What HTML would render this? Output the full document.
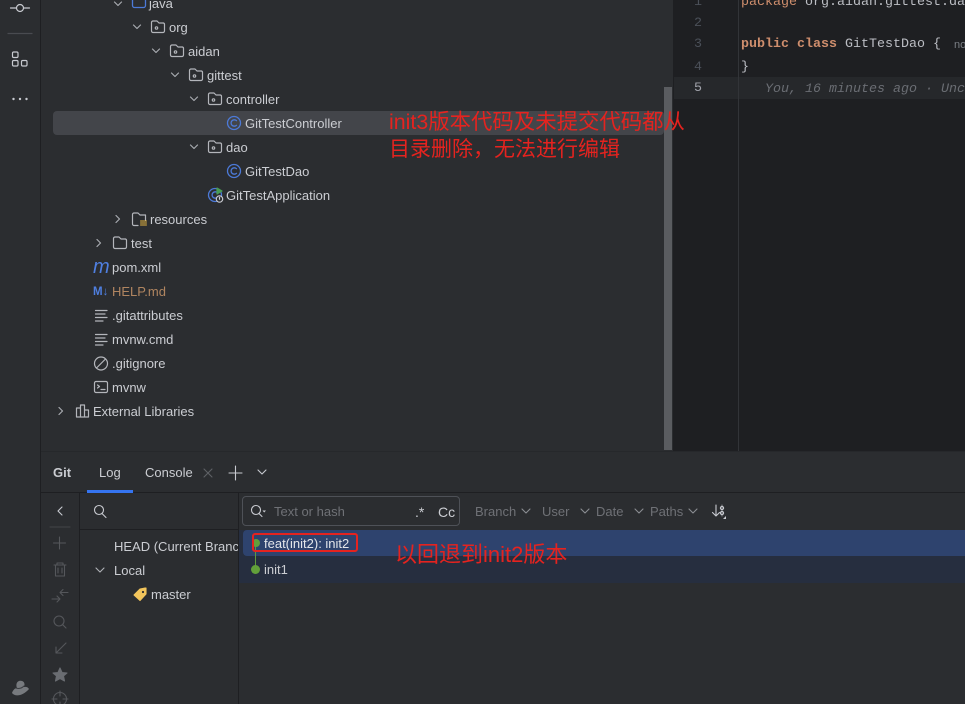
<!DOCTYPE html>
<html><head><meta charset="utf-8"><style>
html,body{margin:0;padding:0}
body{width:965px;height:704px;position:relative;overflow:hidden;background:#2b2d30;font-family:"Liberation Sans","Noto Sans CJK SC",sans-serif;font-size:13px;color:#cbcdd2}
.a{position:absolute}
.t{position:absolute;white-space:nowrap;line-height:16px;height:16px}
.m{position:absolute;white-space:pre;font-family:"Liberation Mono",monospace;font-size:13.33px;line-height:16px}
.r{position:absolute;white-space:nowrap;color:#e5231f;font-family:"Liberation Sans","Noto Sans CJK SC",sans-serif;line-height:24px}
svg{position:absolute;overflow:hidden;fill:none;stroke-linecap:round;stroke-linejoin:round}
</style></head><body>
<!-- left strip -->
<div class="a" style="left:40px;top:0;width:1px;height:704px;background:#1e1f22"></div>
<!-- editor -->
<div class="a" style="left:673px;top:0;width:292px;height:451px;background:#1e1f22"></div>
<div class="a" style="left:674px;top:77px;width:291px;height:22px;background:#26282b"></div>
<div class="a" style="left:738px;top:0;width:1px;height:451px;background:#323438"></div>
<div class="a" style="left:664px;top:87px;width:8px;height:363px;background:#5a5c60"></div>
<div class="a" style="left:41px;top:451px;width:924px;height:1px;background:#26282b"></div>
<div class="a" style="left:41px;top:492px;width:924px;height:1px;background:#1e1f22"></div>
<!-- line numbers -->
<div class="m" style="left:694px;top:-5px;color:#4b5059">1</div>
<div class="m" style="left:694px;top:16px;color:#4b5059">2</div>
<div class="m" style="left:694px;top:37px;color:#4b5059">3</div>
<div class="m" style="left:694px;top:60px;color:#4b5059">4</div>
<div class="m" style="left:694px;top:81px;color:#a1a3ab">5</div>
<div class="m" style="left:741px;top:-5px;color:#bcbec4"><span style="color:#cf8e6d">package</span> org.aidan.gittest.da</div>
<div class="m" style="left:741px;top:37px;color:#bcbec4"><span style="color:#cf8e6d;font-weight:bold">public class</span> GitTestDao {</div>
<div class="t" style="left:954px;top:37px;color:#7a7e85;font-size:11px;width:11px;overflow:hidden">no</div>
<div class="m" style="left:741px;top:60px;color:#bcbec4">}</div>
<div class="m" style="left:765px;top:82px;color:#6a6d73;font-style:italic">You, 16 minutes ago · Unc</div>
<!-- selected tree row -->
<div class="a" style="left:53px;top:111px;width:611px;height:24px;background:#43454a;border-radius:4px"></div>
<!-- left strip icons -->
<svg style="left:0;top:0" width="40" height="110" stroke="#c8cad0" stroke-width="1.2">
<path d="M10.5 8H16M24 8H29.5"/><circle cx="20" cy="8" r="3.5"/>
<path d="M8 33.5H32" stroke="#494b50"/>
<rect x="12.5" y="52" width="5.5" height="5.5" rx="1.2"/><rect x="12.5" y="60.5" width="5.5" height="5.5" rx="1.2"/><rect x="21.5" y="60.5" width="5.5" height="5.5" rx="1.2"/>
<circle cx="13.5" cy="99" r="1.2" fill="#c8cad0" stroke="none"/><circle cx="20" cy="99" r="1.2" fill="#c8cad0" stroke="none"/><circle cx="26.5" cy="99" r="1.2" fill="#c8cad0" stroke="none"/>
</svg>
<svg style="left:10px;top:678px" width="22" height="20"><path d="M2 15C5 19 13 18 19 11C17 8 15 9 14 9C16 4 12 2 9 3C6 4 6 8 7 10C5 10 3 12 2 15Z" fill="#777a7e"/><path d="M6 10C9 11 12 10 14 8" stroke="#3a3c40" stroke-width="1"/></svg>
<!-- tree icons & chevrons -->
<svg style="left:0;top:0" width="340" height="425" stroke="#a8abb0" stroke-width="1.2">
<path d="M114.500 2L118 5.500L121.500 2M133.500 25L137 28.500L140.500 25M152.500 49L156 52.500L159.500 49M171.500 73L175 76.500L178.500 73M190.500 97L194 100.500L197.500 97M190.500 145L194 148.500L197.500 145"/>
<path d="M116 215.500L119.500 219L116 222.500M97 239.500L100.500 243L97 246.500M59 407.500L62.500 411L59 414.500"/>
<path d="M132.500 -1V5.500A2 2 0 0 0 134.500 7.500H143.500A2 2 0 0 0 145.500 5.500V-1" stroke="#4c7ad8" stroke-width="1.3"/>
<g stroke="#b4b6bb"><path d="M151.500 22.500A1.500 1.500 0 0 1 153 21H157L159 23H163.500A1.500 1.500 0 0 1 164.500 24.500V31A1.500 1.500 0 0 1 163 32.500H153A1.500 1.500 0 0 1 151.500 31Z"/><circle cx="156.500" cy="28" r="1.200"/>
<path d="M170.500 46.500A1.500 1.500 0 0 1 172 45H176L178 47H182.500A1.500 1.500 0 0 1 183.500 48.500V55A1.500 1.500 0 0 1 182 56.500H172A1.500 1.500 0 0 1 170.500 55Z"/><circle cx="175.500" cy="52" r="1.200"/>
<path d="M189.500 70.500A1.500 1.500 0 0 1 191 69H195L197 71H201.500A1.500 1.500 0 0 1 202.500 72.500V79A1.500 1.500 0 0 1 201 80.500H191A1.500 1.500 0 0 1 189.500 79Z"/><circle cx="194.500" cy="76" r="1.200"/>
<path d="M208.500 94.500A1.500 1.500 0 0 1 210 93H214L216 95H220.500A1.500 1.500 0 0 1 221.500 96.500V103A1.500 1.500 0 0 1 220 104.500H210A1.500 1.500 0 0 1 208.500 103Z"/><circle cx="213.500" cy="100" r="1.200"/>
<path d="M208.500 142.500A1.500 1.500 0 0 1 210 141H214L216 143H220.500A1.500 1.500 0 0 1 221.500 144.500V151A1.500 1.500 0 0 1 220 152.500H210A1.500 1.500 0 0 1 208.500 151Z"/><circle cx="213.500" cy="148" r="1.200"/>
<path d="M138 225.500H134A1.500 1.500 0 0 1 132.500 224V214.500A1.500 1.500 0 0 1 134 213H138L140 215H145.500V220"/>
<path d="M113.500 238.500A1.500 1.500 0 0 1 115 237H119L121 239H125.500A1.500 1.500 0 0 1 126.500 240.500V247A1.500 1.500 0 0 1 125 248.500H115A1.500 1.500 0 0 1 113.500 247Z"/></g>
<path d="M140.500 221H146.500M140.500 223H146.500M140.500 225H146.500" stroke="#e3b341" stroke-width="1"/>
<g stroke="#4c7ad8" stroke-width="1.300"><circle cx="234" cy="123" r="6.500"/><path d="M236.500 120.700A3.200 3.200 0 1 0 236.500 125.300"/>
<circle cx="234" cy="171" r="6.500"/><path d="M236.500 168.700A3.200 3.200 0 1 0 236.500 173.300"/>
<circle cx="215" cy="195" r="6.500"/><path d="M217.500 192.700A3.200 3.200 0 1 0 217.500 197.300"/></g>
<path d="M217 188V194L222 191Z" fill="#499c54" stroke="#499c54"/><circle cx="219.500" cy="199" r="3.200" fill="#2b2d30" stroke="#c8cad0"/><path d="M219.500 197.300V199.300" stroke="#c8cad0"/>
<g stroke="#b4b6bb"><path d="M95.500 310.500H107M95.500 314H105M95.500 317.500H107M95.500 321H103M95.500 334.500H107M95.500 338H105M95.500 341.500H107M95.500 345H103"/>
<circle cx="101" cy="363.500" r="6.500"/><path d="M96.500 368L105.500 359"/>
<rect x="94.500" y="381.500" width="13" height="11" rx="1.500"/><path d="M97.500 385L99.500 386.500L97.500 388M101 389.500H105"/>
<path d="M76.500 417V408H80.500V417M80.500 417V405H84.500V417M84.500 417V410H88.500V417H76.500"/></g>
</svg>
<div class="t" style="left:93px;top:259px;color:#4f7fe0;font:italic 20px/16px 'Liberation Sans',sans-serif">m</div>
<div class="t" style="left:93px;top:284px;color:#4f7fe0;font-weight:bold;font-size:11.500px">M↓</div>
<!-- tree labels -->
<div class="t" style="left:149px;top:-4px">java</div>
<div class="t" style="left:169px;top:20px">org</div>
<div class="t" style="left:188px;top:44px">aidan</div>
<div class="t" style="left:207px;top:68px">gittest</div>
<div class="t" style="left:226px;top:92px">controller</div>
<div class="t" style="left:245px;top:116px">GitTestController</div>
<div class="t" style="left:226px;top:140px">dao</div>
<div class="t" style="left:245px;top:164px">GitTestDao</div>
<div class="t" style="left:226px;top:188px">GitTestApplication</div>
<div class="t" style="left:150px;top:212px">resources</div>
<div class="t" style="left:131px;top:236px">test</div>
<div class="t" style="left:112px;top:260px">pom.xml</div>
<div class="t" style="left:112px;top:284px;color:#b08560">HELP.md</div>
<div class="t" style="left:112px;top:308px">.gitattributes</div>
<div class="t" style="left:112px;top:332px">mvnw.cmd</div>
<div class="t" style="left:112px;top:356px">.gitignore</div>
<div class="t" style="left:112px;top:380px">mvnw</div>
<div class="t" style="left:93px;top:404px">External Libraries</div>
<!-- annotation 1 -->
<div class="r" style="left:389px;top:110px;font-size:21.400px">init3版本代码及未提交代码都从</div>
<div class="r" style="left:389px;top:138px;font-size:21px">目录删除，无法进行编辑</div>
<!-- tool window tabs -->
<div class="t" style="left:53px;top:465px;font-weight:bold">Git</div>
<div class="t" style="left:99px;top:465px">Log</div>
<div class="a" style="left:87px;top:490px;width:46px;height:3px;background:#3574f0"></div>
<div class="t" style="left:145px;top:465px">Console</div>
<svg style="left:0;top:460px" width="320" height="244" stroke="#8b8d92" stroke-width="1.1">
<path d="M204 9L212 17M212 9L204 17" stroke="#5f6166"/>
<path d="M235.500 6V20M229 13H242" stroke="#c8cad0"/>
<path d="M258 10L262 14L266 10" stroke="#c8cad0"/>
<path d="M62 47L58 51L62 55" stroke="#c8cad0"/>
<path d="M50 67H70" stroke="#434548"/>
<g stroke="#55575b"><path d="M59.500 77V89M53.500 83H65.500M54 105H66M57 105V103H63V105M55.500 105V116H64.500V105M58 108V113M62 108V113"/>
<path d="M68 132.500H60M63 129.500L60 132.500L63 135.500M52 139H60M57 136L60 139L57 142"/>
<circle cx="59" cy="161" r="5"/><path d="M63 165L66 168M56 193L56 187M56 193L62 193M56 193L66 183"/>
<circle cx="60" cy="239" r="6.500"/><path d="M60 231V236M60 242V247M52 239H57M63 239H68"/></g>
<path d="M60 208L62 212.500L67 213L63.500 216L64.500 221L60 218.500L55.500 221L56.500 216L53 213L58 212.500Z" fill="#6a6d72" stroke="#6a6d72"/>
<circle cx="99" cy="50" r="4.500" stroke="#c8cad0"/><path d="M102.500 54L106 57.500" stroke="#c8cad0"/>
<path d="M96 108L100 112L104 108" stroke="#b0b2b7"/>
<path d="M140 129L145 128H146L146 134L140 140.500L134 135Z" fill="#f2c55c" stroke="#f2c55c"/>
<circle cx="143" cy="132" r="1.100" fill="#2b2d30" stroke="none"/>
<circle cx="256" cy="50" r="4.500" stroke="#c8cad0"/><path d="M259.500 54L262 56.500" stroke="#c8cad0"/><path d="M262.500 50.500H266L264.200 52.500Z" fill="#c8cad0" stroke="none"/>
</svg>
<!-- dividers log -->
<div class="a" style="left:79px;top:493px;width:1px;height:211px;background:#1e1f22"></div>
<div class="a" style="left:238px;top:493px;width:1px;height:211px;background:#1e1f22"></div>
<div class="a" style="left:80px;top:529px;width:158px;height:1px;background:#1e1f22"></div>
<!-- search -->
<div class="a" style="left:242px;top:496px;width:216px;height:28px;border:1px solid #4e5157;border-radius:4px"></div>
<div class="t" style="left:274px;top:504px;color:#6f7176">Text or hash</div>
<div class="t" style="left:415px;top:504px;font-size:14px">.*</div>
<div class="t" style="left:438px;top:504px;font-size:14px">Cc</div>
<div class="t" style="left:475px;top:504px;color:#6f7176">Branch</div>
<div class="t" style="left:542px;top:504px;color:#6f7176">User</div>
<div class="t" style="left:596px;top:504px;color:#6f7176">Date</div>
<div class="t" style="left:650px;top:504px;color:#6f7176">Paths</div>
<svg style="left:500px;top:500px" width="240" height="30" stroke="#8b8d92" stroke-width="1.100">
<path d="M22 9L26 13L30 9M81 9L85 13L89 9M135 9L139 13L143 9M189 9L193 13L197 9"/>
<path d="M216 5V16M212.500 12.500L216 16L219.500 12.500" stroke="#c8cad0"/>
<path d="M222 5V16" stroke="#8b8d92"/><circle cx="222" cy="8" r="1.600" stroke="#c8cad0"/><circle cx="222" cy="13" r="1.600" stroke="#c8cad0"/>
<path d="M226 19V16L223 19Z" fill="#c8cad0" stroke="none"/>
</svg>
<!-- log rows -->
<div class="a" style="left:239px;top:530px;width:726px;height:53px;background:#262e3f"></div>
<div class="a" style="left:243px;top:530px;width:722px;height:26px;background:#2e436e;border-radius:4px 0 0 4px"></div>
<div class="a" style="left:255px;top:543px;width:1px;height:26px;background:#5f9a3c"></div>
<div class="a" style="left:252px;top:539px;width:8px;height:8px;border-radius:50%;background:#62a03a"></div>
<div class="a" style="left:251px;top:565px;width:9px;height:9px;border-radius:50%;background:#62a03a"></div>
<div class="t" style="left:264px;top:536px;color:#e4e6ea">feat(init2): init2</div>
<div class="t" style="left:264px;top:562px">init1</div>
<div class="a" style="left:252px;top:533px;width:102px;height:15px;border:2.500px solid #e5231f;border-radius:3px"></div>
<div class="r" style="left:395px;top:543px;font-size:22px">以回退到init2版本</div>
<!-- branches -->
<div class="t" style="left:114px;top:539px;width:124px;overflow:hidden">HEAD (Current Branch)</div>
<div class="t" style="left:114px;top:563px">Local</div>
<div class="t" style="left:151px;top:587px">master</div>
</body></html>
